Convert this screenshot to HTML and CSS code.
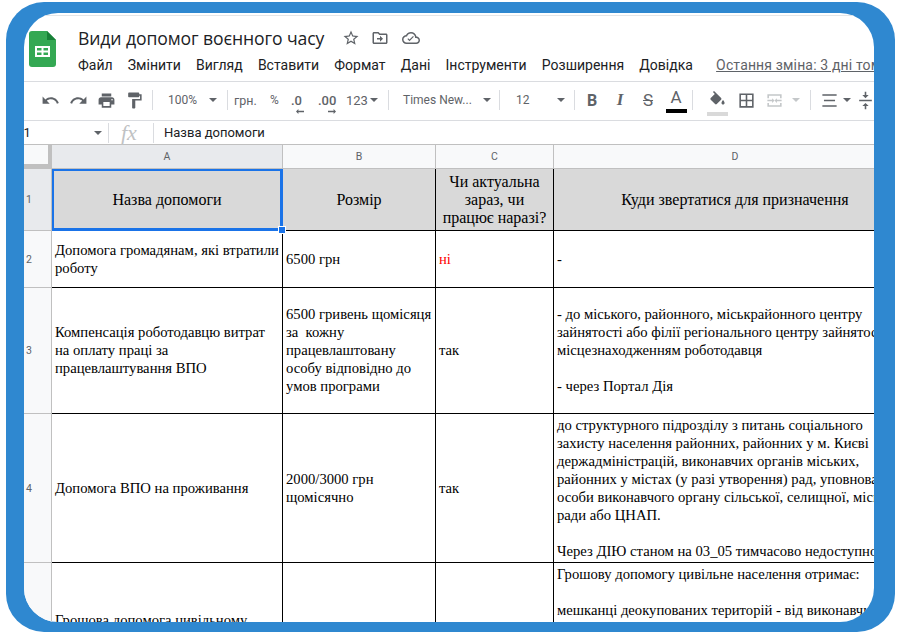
FILE: index.html

```html
<!DOCTYPE html>
<html lang="uk">
<head>
  <meta charset="UTF-8">
  <title>Види допомог воєнного часу</title>
  <link rel="stylesheet" href="styles.css">
</head>
<body>
  <div class="frame">
    <div class="sheet">
      <header class="top">
        <svg class="logo" viewBox="0 0 27 36">
          <path d="M3 0h15l9 9v24a3 3 0 0 1-3 3H3a3 3 0 0 1-3-3V3a3 3 0 0 1 3-3z" fill="#34a853"/>
          <path d="M18 0l9 9h-9z" fill="#188038"/>
          <path d="M6 15h15v11H6zm2 2v2.5h4.5V17zm6.500 0v2.500H19V17zM8 21.500V24h4.500v-2.500zm6.500 0V24H19v-2.500z" fill="#fff" fill-rule="evenodd"/>
        </svg>
        <div class="top-text">
          <div class="title-row">
            <span class="doc-title">Види допомог воєнного часу</span>
            <svg class="title-icon" viewBox="0 0 24 24"><path d="M22 9.240l-7.190-.620L12 2 9.190 8.630 2 9.240l5.460 4.730L5.820 21 12 17.270 18.180 21l-1.630-7.030L22 9.240zM12 15.400l-3.760 2.270 1-4.280-3.320-2.880 4.380-.380L12 6.100l1.710 4.040 4.380.380-3.320 2.880 1 4.280L12 15.400z"/></svg>
            <svg class="title-icon" viewBox="0 0 24 24"><path d="M20 6h-8l-2-2H4c-1.100 0-2 .900-2 2v12c0 1.100.900 2 2 2h16c1.100 0 2-.900 2-2V8c0-1.100-.900-2-2-2zm0 12H4V6h5.170l2 2H20v10zm-8-1l4-4-4-4v3H8v2h4v3z"/></svg>
            <svg class="title-icon cloud" viewBox="0 0 24 24"><path d="M19.350 10.040C18.670 6.590 15.640 4 12 4 9.110 4 6.600 5.640 5.350 8.040 2.340 8.360 0 10.910 0 14c0 3.310 2.690 6 6 6h13c2.760 0 5-2.240 5-5 0-2.640-2.050-4.780-4.650-4.960zM19 18H6c-2.210 0-4-1.790-4-4s1.790-4 4-4h.710C7.370 7.690 9.480 6 12 6c3.040 0 5.500 2.460 5.500 5.500v.500H19c1.660 0 3 1.340 3 3s-1.340 3-3 3zm-9-1.800l-2.800-2.800 1.100-1.100 1.700 1.700 4.700-4.700 1.100 1.100z"/></svg>
          </div>
          <nav class="menu">
            <span>Файл</span>
            <span>Змінити</span>
            <span>Вигляд</span>
            <span>Вставити</span>
            <span>Формат</span>
            <span>Дані</span>
            <span>Інструменти</span>
            <span>Розширення</span>
            <span>Довідка</span>
            <span class="last-edit">Остання зміна: 3 дні тому</span>
          </nav>
        </div>
      </header>

      <div class="toolbar">
        <span class="tool"><svg class="ico" viewBox="0 0 24 24"><path d="M12.500 8c-2.650 0-5.050.990-6.900 2.600L2 7v9h9l-3.620-3.620c1.390-1.160 3.160-1.880 5.120-1.880 3.540 0 6.550 2.310 7.600 5.500l2.370-.780C21.080 11.030 17.150 8 12.500 8z"/></svg></span>
        <span class="tool"><svg class="ico" viewBox="0 0 24 24"><path d="M18.400 10.600C16.550 8.990 14.150 8 11.500 8c-4.650 0-8.580 3.030-9.960 7.220L3.900 16c1.050-3.190 4.050-5.500 7.600-5.500 1.950 0 3.730.720 5.120 1.880L13 16h9V7l-3.600 3.600z"/></svg></span>
        <span class="tool"><svg class="ico" viewBox="0 0 24 24"><path d="M19 8H5c-1.660 0-3 1.340-3 3v6h4v4h12v-4h4v-6c0-1.660-1.340-3-3-3zm-3 11H8v-5h8v5zm3-7c-.550 0-1-.450-1-1s.450-1 1-1 1 .450 1 1-.450 1-1 1zm-1-9H6v4h12V3z"/></svg></span>
        <span class="tool"><svg class="ico" viewBox="0 0 24 24"><path d="M18 4V3c0-.550-.450-1-1-1H5c-.550 0-1 .450-1 1v4c0 .550.450 1 1 1h12c.550 0 1-.450 1-1V6h1v4H9v11c0 .550.450 1 1 1h2c.550 0 1-.450 1-1v-9h8V4h-3z"/></svg></span>
        <i class="sep sep-a"></i>
        <span class="txt zoom-val">100%</span><i class="caret caret-zoom"></i>
        <i class="sep sep-b"></i>
        <span class="txt cur">грн.</span>
        <span class="txt pct">%</span>
        <span class="txt dec dec-less">.0<svg viewBox="0 0 10 6"><path d="M0 3l3-3v2h7v2H3v2z"/></svg></span>
        <span class="txt dec dec-more">.00<svg viewBox="0 0 10 6"><path d="M10 3L7 0v2H0v2h7v2z"/></svg></span>
        <span class="txt num">123</span><i class="caret caret-num"></i>
        <i class="sep sep-c"></i>
        <span class="txt font-name">Times New...</span><i class="caret caret-font"></i>
        <i class="sep sep-d"></i>
        <span class="txt size">12</span><i class="caret caret-size"></i>
        <i class="sep sep-e"></i>
        <span class="glyph g-bold">B</span>
        <span class="glyph g-italic">I</span>
        <span class="glyph g-strike">S</span>
        <span class="glyph g-color">A<b class="bar bar-black"></b></span>
        <i class="sep sep-f"></i>
        <span class="tool fill"><svg class="ico" viewBox="0 0 24 24"><path d="M16.560 8.940L7.620 0 6.210 1.410l2.380 2.380-5.150 5.150c-.590.590-.590 1.540 0 2.120l5.500 5.500c.290.290.680.440 1.060.440s.770-.150 1.060-.440l5.500-5.500c.590-.580.590-1.530 0-2.120zM19 11.500s-2 2.170-2 3.500c0 1.100.900 2 2 2s2-.900 2-2c0-1.330-2-3.500-2-3.500z"/></svg><b class="bar bar-grey"></b></span>
        <span class="tool borders"><svg class="ico" viewBox="0 0 24 24"><path d="M3 3v18h18V3H3zm8 16H5v-6h6v6zm0-8H5V5h6v6zm8 8h-6v-6h6v6zm0-8h-6V5h6v6z"/></svg></span>
        <span class="tool merge"><svg class="ico ico-off" viewBox="0 0 24 24"><path d="M3 4h18v5h-2V6H5v3H3zM3 15h2v3h14v-3h2v5H3zM3 11h6v-2l3 3-3 3v-2H3zM21 13h-6v2l-3-3 3-3v2h6z"/></svg></span>
        <i class="caret caret-off"></i>
        <i class="sep sep-g"></i>
        <span class="tool align"><svg class="ico" viewBox="0 0 24 24"><path d="M3 4h18v2H3zM5 11h14v2H5zM3 18h18v2H3z"/></svg></span>
        <i class="caret caret-align"></i>
        <span class="tool valign"><svg class="ico" viewBox="0 0 24 24"><path d="M8 5h3V1h2v4h3l-4 4zM4 11h16v2H4zM8 19l4-4 4 4h-3v4h-2v-4z"/></svg></span>
      </div>

      <div class="formula">
        <span class="name-box">A1</span>
        <i class="caret caret-name"></i>
        <i class="sep sep-h"></i>
        <span class="fx">fx</span>
        <i class="sep sep-i"></i>
        <span class="formula-text">Назва допомоги</span>
      </div>

      <table class="grid">
        <colgroup>
          <col class="c-row"><col class="c-a"><col class="c-b"><col class="c-c"><col class="c-d">
        </colgroup>
        <tr class="r-head">
          <th class="corner"></th>
          <th class="col-sel">A</th>
          <th>B</th>
          <th>C</th>
          <th>D</th>
        </tr>
        <tr class="r1">
          <th class="row-num row-sel">1</th>
          <td class="hd selected">Назва допомоги<span class="handle"></span></td>
          <td class="hd">Розмір</td>
          <td class="hd">Чи актуальна зараз, чи працює наразі?</td>
          <td class="hd">Куди звертатися для призначення</td>
        </tr>
        <tr class="r2">
          <th class="row-num">2</th>
          <td>Допомога громадянам, які втратили роботу</td>
          <td>6500 грн</td>
          <td class="no">ні</td>
          <td class="long">-</td>
        </tr>
        <tr class="r3">
          <th class="row-num">3</th>
          <td>Компенсація роботодавцю витрат на оплату праці за працевлаштування ВПО</td>
          <td>6500 гривень щомісяця за&nbsp; кожну працевлаштовану особу відповідно до умов програми</td>
          <td>так</td>
          <td class="long">- до міського, районного, міськрайонного центру<br>зайнятості або філії регіонального центру зайнятості за<br>місцезнаходженням роботодавця<br><br>- через Портал Дія</td>
        </tr>
        <tr class="r4">
          <th class="row-num">4</th>
          <td>Допомога ВПО на проживання</td>
          <td>2000/3000 грн щомісячно</td>
          <td>так</td>
          <td class="long">до структурного підрозділу з питань соціального<br>захисту населення районних, районних у м. Києві<br>держадміністрацій, виконавчих органів міських,<br>районних у містах (у разі утворення) рад, уповноваженої<br>особи виконавчого органу сільської, селищної, міської<br>ради або ЦНАП.<br><br>Через ДІЮ станом на 03_05 тимчасово недоступно</td>
        </tr>
        <tr class="r5">
          <th class="row-num"></th>
          <td>Грошова допомога цивільному населенню</td>
          <td></td>
          <td></td>
          <td class="long top-al">Грошову допомогу цивільне населення отримає:<br><br>мешканці деокупованих територій - від виконавчих</td>
        </tr>
      </table>
    </div>
  </div>
</body>
</html>
```

FILE: styles.css

```css
* { box-sizing: border-box; }
html, body { margin: 0; height: 100%; background: #fff; overflow: hidden; }

.frame {
  width: 889px;
  height: 630px;
  margin: 2px 0 0 6px;
  padding: 11px 21px 10px 18px;
  background: #2f88d0;
  border-radius: 38px;
}
.sheet {
  height: 609px;
  background: #fff;
  border-radius: 34px;
  overflow: hidden;
  font-family: Roboto, sans-serif;
}

/* title + menu */
.top {
  display: flex;
  height: 67px;
  margin-top: 2px;
  padding: 15px 0 0 5px;
  border-top: 1px solid #e4e6e8;
  border-bottom: 1px solid #dadce0;
  white-space: nowrap;
}
.logo { width: 27px; height: 36px; flex: none; }
.top-text { margin-left: 22px; }
.title-row { display: flex; align-items: center; height: 24px; margin-top: -5px; }
.doc-title { font-size: 17.600px; color: #202124; font-family: "Open Sans", sans-serif; letter-spacing: -.1px; margin-right: 18px; }
.title-icon { width: 18px; height: 18px; margin-right: 11px; fill: #5f6368; flex: none; }
.title-icon.cloud { margin-left: 2px; }
.menu { display: flex; gap: 15.200px; margin-top: 7px; font-size: 14px; color: #202124; }
.menu .last-edit { margin-left: 8px; color: #5f6368; text-decoration: underline; letter-spacing: .15px; }

/* toolbar */
.toolbar {
  display: flex;
  align-items: center;
  height: 39px;
  padding: 0 0 2px 12px;
  border-bottom: 1px solid #dadce0;
  color: #5f6368;
  white-space: nowrap;
}
.tool { position: relative; display: flex; justify-content: center; align-items: center; width: 28px; height: 28px; flex: none; }
.ico { width: 19px; height: 19px; fill: #5f6368; }
.ico-off { fill: #c4c7c9; }
.sep { display: block; width: 1px; height: 20px; background: #dadce0; flex: none; }
.caret { display: block; width: 0; height: 0; flex: none; border: 4px solid transparent; border-top: 4px solid #5f6368; border-bottom: 0; }
.txt { font-size: 13px; flex: none; }
.sep-a { margin-left: 4px; }
.zoom-val { width: 30px; margin-left: 15px; font-size: 12px; }
.caret-zoom { margin-left: 11px; }
.sep-b { margin-left: 10px; }
.cur { width: 24px; margin-left: 6px; font-size: 12.500px; }
.pct { width: 10px; margin-left: 12px; font-size: 12px; }
.dec { position: relative; font-size: 13px; font-weight: 500; }
.dec svg { position: absolute; bottom: -6px; width: 8px; height: 5px; fill: #5f6368; }
.dec-less { width: 16px; margin-left: 11px; }
.dec-less svg { left: 5px; }
.dec-more { width: 18px; margin-left: 11px; }
.dec-more svg { left: 10px; }
.num { width: 23px; margin-left: 10px; }
.caret-num { margin-left: 1px; }
.sep-c { margin-left: 10px; }
.font-name { width: 70px; margin-left: 14px; font-size: 12px; }
.caret-font { margin-left: 10px; }
.sep-d { margin-left: 8px; }
.size { width: 14px; margin-left: 16px; font-size: 12px; }
.caret-size { margin-left: 27px; }
.sep-e { margin-left: 9px; }
.glyph { position: relative; width: 28px; text-align: center; flex: none; font-size: 16px; }
.g-bold { margin-left: 3px; font-weight: 700; }
.g-italic { font: italic 700 17px "Liberation Serif", serif; }
.g-strike { font-size: 17px; text-decoration: line-through; }
.g-color { font-size: 17px; line-height: 18px; height: 25px; }
.bar { position: absolute; display: block; left: 50%; bottom: 0; width: 21px; height: 4px; margin-left: -10px; }
.bar-black { background: #000; }
.bar-grey { background: #d9d9d9; bottom: -2px; }
.sep-f { margin-left: 2px; }
.fill { margin-left: 11px; width: 26px; }
.borders { margin-left: 2px; width: 28px; }
.merge { margin-left: -1px; width: 30px; }
.caret-off { margin-left: 3px; border-top-color: #c4c7c9; }
.sep-g { margin-left: 10px; }
.align { margin-left: 4px; width: 28px; }
.caret-align { margin-left: 0; }
.valign { margin-left: 0; }

/* formula bar */
.formula {
  display: flex;
  align-items: center;
  height: 24px;
  border-bottom: 1px solid #c0c0c0;
  white-space: nowrap;
}
.name-box { width: 71px; margin-left: -9px; margin-right: 8px; font-size: 13px; color: #202124; flex: none; }
.sep-h { margin-left: 6px; }
.fx { width: 44px; padding-left: 12px; font: italic 22px "Liberation Serif", serif; color: #c0c2c4; flex: none; }
.formula-text { margin-left: 10px; font-size: 13px; color: #202124; }

/* grid */
.grid { table-layout: fixed; width: 893px; border-collapse: separate; border-spacing: 0; font: 14.670px/18px "Liberation Serif", serif; color: #000; }
.c-row { width: 28px; }
.c-a { width: 231px; }
.c-b { width: 153px; }
.c-c { width: 118px; }
.c-d { width: 363px; }
.r-head { height: 24px; }
.r1 { height: 62px; }
.r2 { height: 57px; }
.r3 { height: 126px; }
.r4 { height: 149px; }
.r5 { height: 132px; }

.grid th {
  padding: 0;
  font: 400 10.500px Roboto, sans-serif;
  color: #5f6368;
  background: #f8f9fa;
  border-right: 1px solid #c0c0c0;
  border-bottom: 1px solid #c0c0c0;
}
.grid .corner { border-right-width: 4px; border-bottom-width: 5px; }
.grid .col-sel, .grid .row-sel { background: #e8eaed; }
.grid .row-num { text-align: left; padding-left: 2px; }

.grid td {
  padding: 0 3px;
  border-right: 1px solid #000;
  border-bottom: 1px solid #000;
  vertical-align: middle;
  overflow: hidden;
}
.grid .r3 td { padding-bottom: 2px; }
.grid .hd { background: #d9d9d9; text-align: center; font-size: 16px; }
.grid .selected { position: relative; overflow: visible; box-shadow: inset 0 0 0 2px #1a73e8; border-color: #1a73e8; }
.handle { position: absolute; right: -4px; bottom: -4px; width: 8px; height: 8px; background: #1a73e8; border: 1px solid #fff; }
.grid .long { white-space: nowrap; }
.grid .no { color: #f00; }
.grid .top-al { vertical-align: top; padding-top: 2px; }
```
